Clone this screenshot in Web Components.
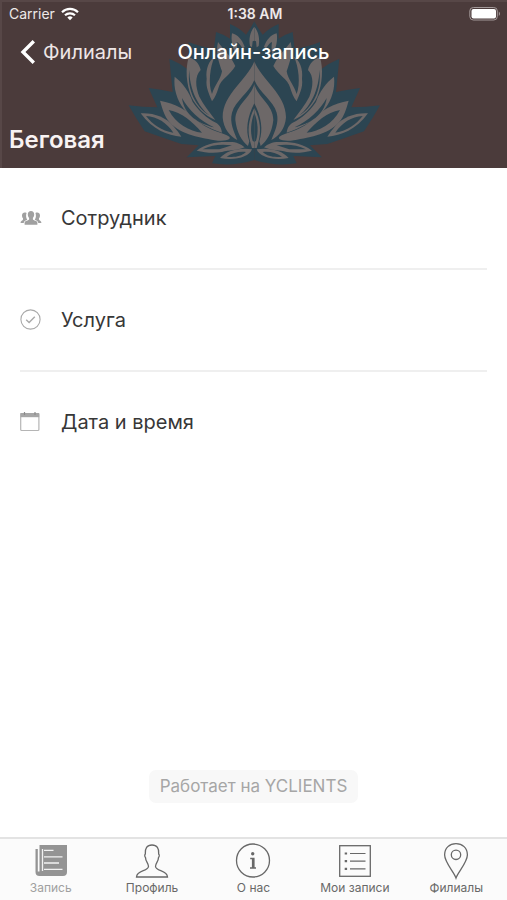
<!DOCTYPE html>
<html lang="ru">
<head>
<meta charset="utf-8">
<meta name="viewport" content="width=device-width, initial-scale=1">
<title>Онлайн-запись</title>
<style>
  body {
    background: #fff;
    color: #373737;
    font-family: Inter, "Liberation Sans", sans-serif;
    margin: 0;
  }
</style>
</head>
<body>
<booking-app>
  <branch-header slot="header" branch="Беговая">
    <status-bar slot="status" carrier="Carrier" time="1:38 AM"></status-bar>
    <nav-bar slot="nav" back="Филиалы">Онлайн-запись</nav-bar>
  </branch-header>
  <option-row icon="people">Сотрудник</option-row>
  <option-row icon="check">Услуга</option-row>
  <option-row icon="calendar">Дата и время</option-row>
  <powered-by slot="footer">Работает на YCLIENTS</powered-by>
  <tab-bar slot="tabs">
    <tab-item icon="news" href="#booking" active>Запись</tab-item>
    <tab-item icon="person" href="#profile">Профиль</tab-item>
    <tab-item icon="info" href="#about">О нас</tab-item>
    <tab-item icon="list" href="#records">Мои записи</tab-item>
    <tab-item icon="pin" href="#branches">Филиалы</tab-item>
  </tab-bar>
</booking-app>

<script>
const ROW_ICONS = {
  people: `
    <svg width="22" height="22" viewBox="0 0 22 22" fill="#a0a0a0">
      <path d="M7.800 7.500C7.800 5.200 9 4 11 4s3.200 1.200 3.200 3.500c0 1.500-.6 2.700-1.300 3.400v1.700c.3 1 4.500 1 4.500 3.400v1.800H4.600V16c0-2.400 4.200-2.400 4.500-3.400v-1.700C8.400 10.200 7.800 9 7.800 7.500z"/>
      <path d="M6.600 6C4.400 4.800 2 5.800 2 8.400c0 1.200.3 2.200 1 2.900v1.200C2.800 13.600.6 13.600.6 16h3.100c.2-1.800 1.800-2.600 3.600-3.300-.7-.9-1.200-2.200-1.200-3.700 0-1.200.1-2.200.5-3z"/>
      <path d="M15.400 6c2.200-1.200 4.600-.2 4.600 2.400 0 1.200-.3 2.200-1 2.900v1.200c.2 1.100 2.400 1.100 2.400 3.500h-3.100c-.2-1.800-1.800-2.600-3.600-3.300.7-.9 1.200-2.200 1.200-3.700 0-1.200-.1-2.200-.5-3z"/>
    </svg>`,
  check: `
    <svg width="22" height="22" viewBox="0 0 22 22" fill="none" stroke="#a9a9a9">
      <circle cx="10.500" cy="10.500" r="9.600" stroke-width="1.100"/>
      <path d="M6.200 10.700l2.900 2.800 5.700-5.800" stroke-width="1.400"/>
    </svg>`,
  calendar: `
    <svg width="22" height="22" viewBox="0 0 22 22" fill="none">
      <rect x=".7" y="2.500" width="18.200" height="17" rx="1" stroke="#b5b5b5" stroke-width="1.200"/>
      <path d="M.5 2h18.700v4.200H.5z" fill="#a6a6a6"/>
      <path d="M4.500 1v3M15 1v3" stroke="#8c8c8c" stroke-width="1.200"/>
    </svg>`
};

const TAB_ICONS = {
  news: `
    <svg width="38" height="38" viewBox="0 0 38 38">
      <path d="M7.500 3H35v27a4 4 0 0 1-4 4H7.500a4 4 0 0 1-4-4V7h2.300v22.500h1.700z" fill="#949494"/>
      <path d="M10.500 7v22M12 8.300h9.500M12 14.800h18.500M12 21h15M12 27.300h18.500" fill="none" stroke="#f2f2f2" stroke-width="1.300"/>
    </svg>`,
  person: `
    <svg width="38" height="38" viewBox="0 0 38 38" fill="none" stroke="#686868" stroke-width="1.300">
      <path d="M15.500 24.500c0-3.500-3-5-3-9-.9-.8-1-2.600-.2-3.500C11.800 6.500 14 3 19 3s7.200 3.500 6.700 9c.8.900.7 2.700-.2 3.500 0 4-3 5.500-3 9 .5 5 11.500 3.500 12 10.500h-31c.5-7 11.500-5.500 12-10.500z"/>
    </svg>`,
  info: `
    <svg width="38" height="38" viewBox="0 0 38 38">
      <circle cx="19" cy="18.500" r="16.500" fill="none" stroke="#686868" stroke-width="1.300"/>
      <circle cx="18.700" cy="11.700" r="1.700" fill="#686868"/>
      <path d="M16.200 16.500h3.700v9.300M16 26h6" fill="none" stroke="#686868" stroke-width="1.300"/>
      <path d="M19 16.500V26" stroke="#686868" stroke-width="2.200"/>
    </svg>`,
  list: `
    <svg width="38" height="38" viewBox="0 0 38 38" fill="none" stroke="#686868">
      <rect x="3.700" y="3.700" width="30.600" height="30.600" stroke-width="1.300"/>
      <path d="M14 11.500h15.500M14 19.200h15.500M14 26.900h15.500" stroke-width="1.200"/>
      <path d="M8.700 11.500h2.400M8.700 19.200h2.400M8.700 26.900h2.400" stroke-width="2.200"/>
    </svg>`,
  pin: `
    <svg width="38" height="38" viewBox="0 0 38 38" fill="none" stroke="#686868" stroke-width="1.300">
      <path d="M19 36C17 30 7.600 20.500 7.600 12.800 7.600 6 12.700 1.600 19 1.600s11.400 4.400 11.400 11.200C30.400 20.500 21 30 19 36z"/>
      <circle cx="19" cy="12.800" r="4.700"/>
    </svg>`
};

// One half of the flower, the other one is mirrored
const LOTUS = `
  <svg class="lotus" viewBox="0 0 804 444" aria-hidden="true">
    <g id="half">
      <path fill="#2c4552" d="M403 4Q392 26 378 44 356 22 330 12L330 56Q308 42 288 36L282 86Q244 82 206 66L206 150Q178 128 148 116L158 216Q122 208 86 204L112 262Q68 262 26 256 48 296 74 334 124 352 184 372L236 376 200 412 286 408 276 430Q340 440 403 420z"/>
      <g fill="#6d6868">
        <path d="M403 20C390 36 386 56 390 78L396 82 398 64 403 62z"/>
        <path d="M336 40C354 44 366 60 374 80L368 86C362 76 356 68 350 66 352 80 352 92 348 104 338 84 332 62 336 40z"/>
        <path d="M294 66C306 84 332 106 346 138 332 164 302 178 296 202 290 220 286 232 276 244 270 226 256 204 260 176 256 146 268 120 284 110 270 140 264 190 276 222 284 196 302 178 306 154 296 124 286 98 294 66z"/>
        <path d="M206 112C226 118 238 132 242 150 224 168 226 200 238 230 250 254 270 278 286 300 256 288 230 262 214 230 198 190 196 146 206 112z"/>
        <path d="M164 170C188 188 208 216 218 246 234 270 260 296 288 308 298 314 304 322 306 338 268 326 222 304 192 268 170 238 160 204 164 170z"/>
        <path d="M120 242C164 250 204 270 240 308 274 334 310 338 328 350 334 358 320 362 294 362 244 354 184 346 148 306 132 286 126 262 120 242z"/>
        <path d="M62 280C102 278 138 292 160 318 170 330 178 340 184 350 142 346 98 330 62 280z"/>
        <path d="M230 392C256 370 294 364 330 366 350 366 362 372 374 382 354 392 328 390 306 396 280 400 256 398 230 392z"/>
        <path d="M300 414C318 394 352 382 396 388 388 412 344 422 300 414z"/>
        <path d="M403 124C382 180 308 222 308 292 310 326 330 350 352 360 342 334 328 308 336 278 346 242 388 218 403 180z"/>
        <path d="M403 192C392 234 346 254 346 300 350 338 366 364 384 378L388 364C376 330 382 290 403 250z"/>
        <path d="M403 264C384 300 382 336 391 366L396 384H403z"/>
      </g>
      <g fill="#2c4552">
        <path d="M78 288C112 290 140 308 160 338 124 332 98 314 78 288z"/>
        <path d="M146 270C186 278 216 304 246 338 208 334 168 312 146 270z"/>
        <path d="M186 234C204 268 242 304 282 322 238 312 192 286 186 234z"/>
        <path d="M208 150C208 206 234 260 268 286 228 262 200 210 208 150z"/>
        <path d="M248 388C276 374 304 372 336 376L298 388z"/>
        <path d="M320 410C338 398 356 394 378 396 362 410 346 412 320 410z"/>
        <path d="M403 278C392 306 390 336 398 362L403 366z"/>
      </g>
    </g>
    <use href="#half" transform="translate(806 0) scale(-1 1)"/>
  </svg>`;

class BookingApp extends HTMLElement {
  constructor() {
    super();
    this.attachShadow({ mode: 'open' });
  }

  connectedCallback() {
    this.shadowRoot.innerHTML = `
      <style>
        :host {
          display: flex;
          flex-direction: column;
          min-height: 100vh;
        }

        main {
          flex: 1;
          padding: 0 20px;
        }
      </style>

      <slot name="header"></slot>
      <main><slot></slot></main>
      <slot name="footer"></slot>
      <slot name="tabs"></slot>
    `;
  }
}

class BranchHeader extends HTMLElement {
  constructor() {
    super();
    this.attachShadow({ mode: 'open' });
  }

  connectedCallback() {
    this.shadowRoot.innerHTML = `
      <style>
        :host {
          background: #4b3b3b;
          box-shadow: inset 2px 2px #574747;
          color: #fff;
          display: block;
          overflow: hidden;
          position: relative;
        }

        .lotus {
          bottom: 0;
          height: 148px;
          left: 50%;
          margin-left: -134px;
          position: absolute;
          width: 268px;
        }

        .content {
          position: relative;
        }

        h2 {
          color: #f8f2f2;
          font-size: 24px;
          font-weight: 600;
          line-height: 32px;
          margin: 0;
          padding: 48px 9px 12px;
        }
      </style>

      ${LOTUS}
      <div class="content">
        <slot name="status"></slot>
        <slot name="nav"></slot>
        <h2>${this.getAttribute('branch')}</h2>
      </div>
    `;
  }
}

class StatusBar extends HTMLElement {
  constructor() {
    super();
    this.attachShadow({ mode: 'open' });
  }

  connectedCallback() {
    this.shadowRoot.innerHTML = `
      <style>
        :host {
          align-items: center;
          color: #eee9e9;
          display: grid;
          font-size: 14px;
          grid-template-columns: 1fr auto 1fr;
          line-height: 28px;
          padding: 0 6px 0 9px;
        }

        .carrier {
          align-items: center;
          display: flex;
          gap: 6px;
        }

        .time {
          font-weight: 600;
        }

        .battery {
          justify-self: end;
        }
      </style>

      <span class="carrier">
        ${this.getAttribute('carrier')}
        <svg width="18" height="14" viewBox="0 0 18 14" fill="none" stroke="#fff" stroke-width="2.200" aria-hidden="true">
          <path d="M1 5.200a11.500 11.500 0 0 1 16 0M4 8.300a7.200 7.200 0 0 1 10 0"/>
          <path d="M9 13.200l-2.700-2.700a3.800 3.800 0 0 1 5.400 0z" fill="#fff" stroke="none"/>
        </svg>
      </span>
      <span class="time">${this.getAttribute('time')}</span>
      <svg class="battery" width="32" height="16" viewBox="0 0 32 16" aria-hidden="true">
        <rect x=".8" y="1.500" width="27.500" height="12.500" rx="3.500" fill="none" stroke="#a39999" stroke-width="1"/>
        <rect x="2.500" y="3" width="24.500" height="9.500" rx="2" fill="#fff"/>
        <path d="M29.800 5.500c1.600.8 1.600 3.700 0 4.500z" fill="#a39999"/>
      </svg>
    `;
  }
}

class NavBar extends HTMLElement {
  constructor() {
    super();
    this.attachShadow({ mode: 'open' });
  }

  connectedCallback() {
    this.shadowRoot.innerHTML = `
      <style>
        :host {
          align-items: center;
          display: grid;
          font-size: 20px;
          grid-template-columns: 1fr auto 1fr;
          line-height: 24px;
          padding: 12px 20px;
        }

        a {
          align-items: center;
          color: #eee6e6;
          display: flex;
          gap: 7px;
          text-decoration: none;
        }

        h1 {
          font-size: 20px;
          font-weight: 500;
          margin: 0;
        }
      </style>

      <a href="#branches">
        <svg width="16" height="24" viewBox="0 0 16 24" fill="none" stroke="#fff" stroke-width="3.400" aria-hidden="true">
          <path d="M13.800 1.200L3 12l10.800 10.800"/>
        </svg>
        ${this.getAttribute('back')}
      </a>
      <h1><slot></slot></h1>
    `;
  }
}

class OptionRow extends HTMLElement {
  constructor() {
    super();
    this.attachShadow({ mode: 'open' });
  }

  connectedCallback() {
    this.shadowRoot.innerHTML = `
      <style>
        :host {
          border-bottom: 2px solid #efefef;
          display: block;
        }

        :host(:last-of-type) {
          border-bottom: 0;
        }

        button {
          align-items: center;
          background: none;
          border: 0;
          color: inherit;
          cursor: pointer;
          display: flex;
          font: inherit;
          font-size: 20px;
          gap: 19px;
          line-height: 24px;
          padding: 38px 0;
          text-align: left;
          width: 100%;
        }
      </style>

      <button type="button">${ROW_ICONS[this.getAttribute('icon')]}<slot></slot></button>
    `;
  }
}

class PoweredBy extends HTMLElement {
  constructor() {
    super();
    this.attachShadow({ mode: 'open' });
  }

  connectedCallback() {
    this.shadowRoot.innerHTML = `
      <style>
        :host {
          display: flex;
          justify-content: center;
          padding-bottom: 34px;
        }

        a {
          background: #f8f8f8;
          border-radius: 7px;
          color: #a6a6a6;
          font-size: 17px;
          line-height: 33px;
          padding: 0 11px;
          text-decoration: none;
        }
      </style>

      <a href="#yclients"><slot></slot></a>
    `;
  }
}

class TabBar extends HTMLElement {
  constructor() {
    super();
    this.attachShadow({ mode: 'open' });
  }

  connectedCallback() {
    this.shadowRoot.innerHTML = `
      <style>
        :host {
          background: #fbfbfb;
          border-top: 2px solid #e3e3e3;
          display: block;
        }

        nav {
          display: grid;
          grid-template-columns: repeat(5, 1fr);
          padding: 3px 0 4px;
        }
      </style>

      <nav><slot></slot></nav>
    `;
  }
}

class TabItem extends HTMLElement {
  constructor() {
    super();
    this.attachShadow({ mode: 'open' });
  }

  connectedCallback() {
    this.shadowRoot.innerHTML = `
      <style>
        :host {
          color: #686868;
          display: block;
        }

        :host([active]) {
          color: #a0a0a0;
        }

        a {
          align-items: center;
          color: inherit;
          display: flex;
          flex-direction: column;
          font-size: 12px;
          line-height: 16px;
          text-decoration: none;
          white-space: nowrap;
        }
      </style>

      <a href="${this.getAttribute('href')}">
        ${TAB_ICONS[this.getAttribute('icon')]}
        <span><slot></slot></span>
      </a>
    `;
  }
}

customElements.define('booking-app', BookingApp);
customElements.define('branch-header', BranchHeader);
customElements.define('status-bar', StatusBar);
customElements.define('nav-bar', NavBar);
customElements.define('option-row', OptionRow);
customElements.define('powered-by', PoweredBy);
customElements.define('tab-bar', TabBar);
customElements.define('tab-item', TabItem);
</script>
</body>
</html>
